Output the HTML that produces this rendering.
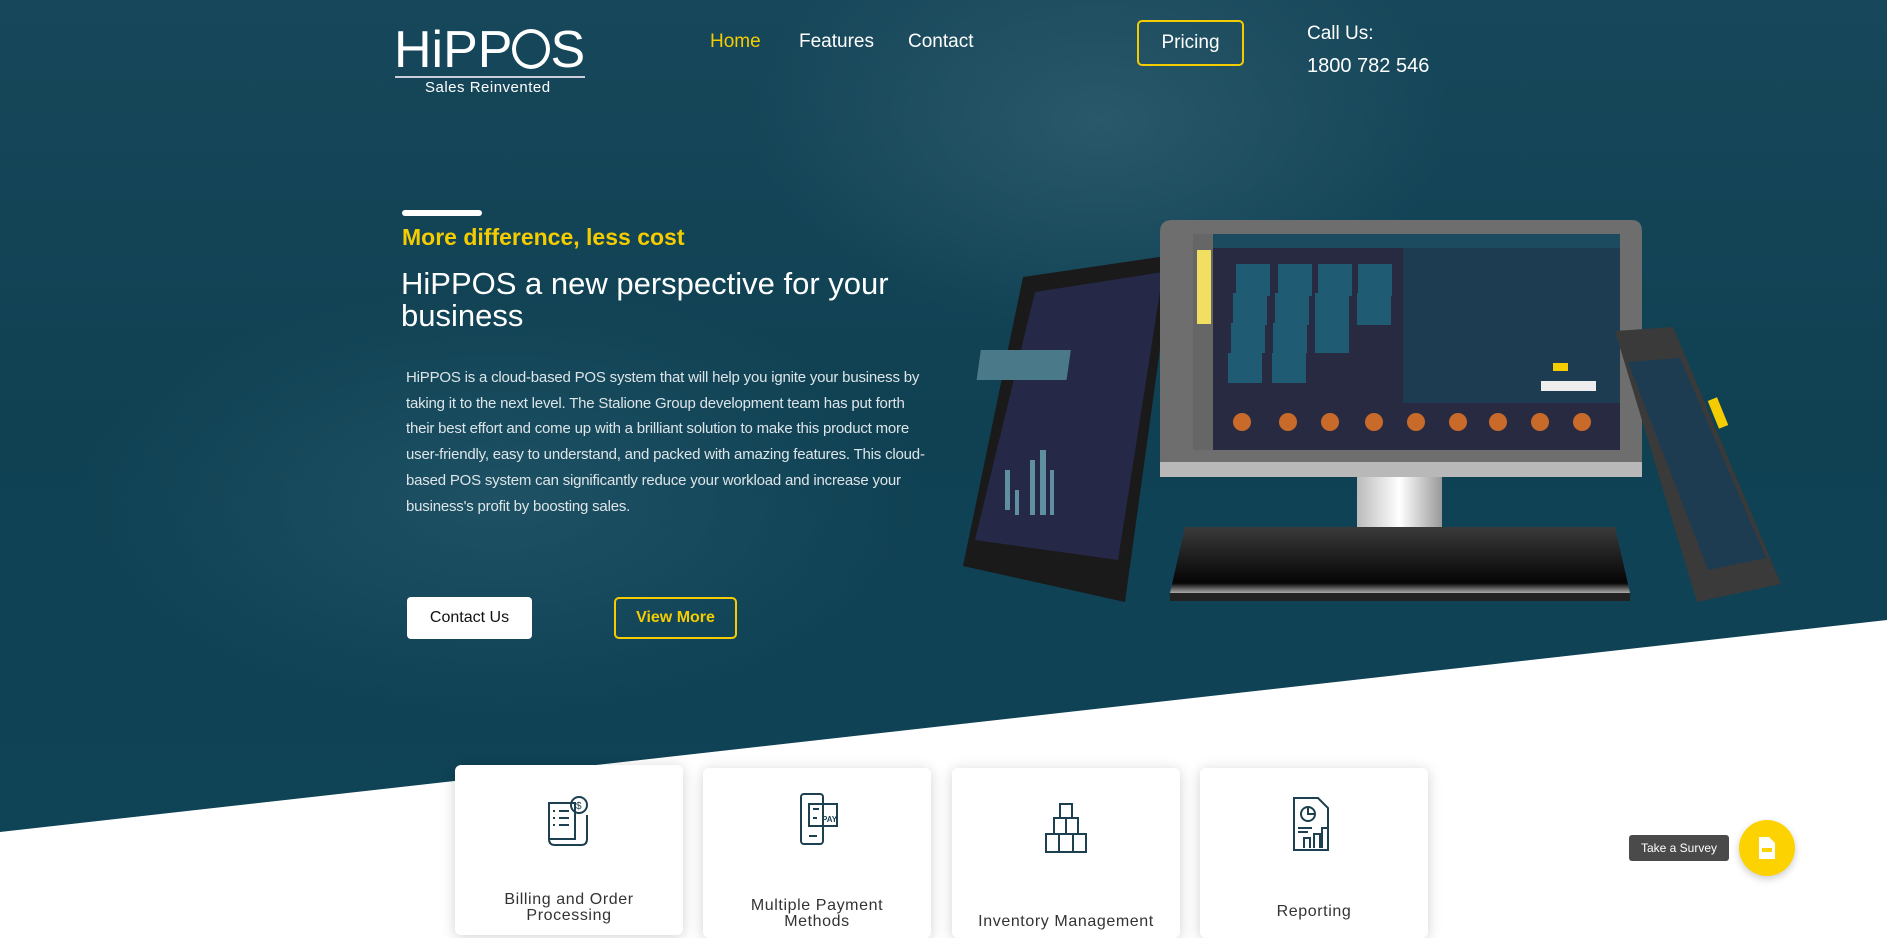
<!DOCTYPE html>
<html><head><meta charset="utf-8"><style>
*{margin:0;padding:0;box-sizing:border-box}
body{width:1887px;height:920px;overflow:hidden;background:#fff;font-family:"Liberation Sans",sans-serif;position:relative}
.hero{position:absolute;left:0;top:0;width:1887px;height:840px;
background:radial-gradient(ellipse 500px 300px at 1100px 120px,#285869 0%,rgba(40,88,105,0) 70%),radial-gradient(ellipse 600px 300px at 500px 500px,#1d5163 0%,rgba(29,81,99,0) 70%),linear-gradient(180deg,#17475a 0%,#0f4153 50%,#0f4356 100%);
clip-path:polygon(0 0,1887px 0,1887px 620px,0 832px)}
.a{position:absolute;white-space:nowrap}
.nav{font-size:19px;color:#fff;top:31px}
.card{position:absolute;top:768px;width:228px;height:170px;background:#fff;border-radius:6px;box-shadow:0 2px 14px rgba(0,0,0,.18)}
.card .t{position:absolute;left:0;right:0;text-align:center;font-size:16px;color:#333;letter-spacing:.6px;line-height:16px}
.card svg{position:absolute;left:50%;transform:translateX(-50%)}
</style></head><body>
<div class="hero"></div>
<div class="a" style="left:394px;top:22px;font-size:52px;color:#fff;letter-spacing:0px;line-height:56px">HiPP<span style="display:inline-block;width:38px;height:40px;border:4px solid #fff;border-radius:50%;vertical-align:-2px"></span>S</div>
<div class="a" style="left:395px;top:76px;width:190px;height:2px;background:#ccd"></div>
<div class="a" style="left:425px;top:79px;font-size:15px;color:#fff;letter-spacing:.5px">Sales Reinvented</div>
<div class="a nav" style="left:710px;color:#f5cc00">Home</div>
<div class="a nav" style="left:799px">Features</div>
<div class="a nav" style="left:908px">Contact</div>
<div class="a" style="left:1137px;top:20px;width:107px;height:46px;border:2px solid #f5cc00;border-radius:5px;color:#fff;font-size:19px;text-align:center;line-height:42px">Pricing</div>
<div class="a" style="left:1307px;top:23px;color:#fff;font-size:19px">Call Us:</div>
<div class="a" style="left:1307px;top:55px;color:#fff;font-size:20px">1800 782 546</div>

<div class="a" style="left:402px;top:210px;width:80px;height:6px;background:#fff;border-radius:3px"></div>
<div class="a" style="left:402px;top:224px;font-size:23px;font-weight:bold;color:#f5cc00">More difference, less cost</div>
<div class="a" style="left:401px;top:268px;font-size:31px;color:#fff;line-height:32px">HiPPOS a new perspective for your<br>business</div>
<div class="a" style="left:406px;top:365px;font-size:15px;color:#dde5e9;line-height:25.7px;letter-spacing:-.2px">HiPPOS is a cloud-based POS system that will help you ignite your business by<br>taking it to the next level. The Stalione Group development team has put forth<br>their best effort and come up with a brilliant solution to make this product more<br>user-friendly, easy to understand, and packed with amazing features. This cloud-<br>based POS system can significantly reduce your workload and increase your<br>business's profit by boosting sales.</div>
<div class="a" style="left:407px;top:597px;width:125px;height:42px;background:#fff;border-radius:4px;font-size:16px;color:#111;text-align:center;line-height:42px">Contact Us</div>
<div class="a" style="left:614px;top:597px;width:123px;height:42px;border:2px solid #f5cc00;border-radius:5px;font-size:16px;font-weight:bold;color:#f5cc00;text-align:center;line-height:38px">View More</div>

<svg class="a" style="left:0;top:0" width="1887" height="640" viewBox="0 0 1887 640">
<defs><linearGradient id="base" x1="0" y1="0" x2="0" y2="1"><stop offset="0" stop-color="#3a3a3a"/><stop offset=".85" stop-color="#050505"/><stop offset="1" stop-color="#aaa"/></linearGradient>
<linearGradient id="neck" x1="0" x2="1"><stop offset="0" stop-color="#bbb"/><stop offset=".5" stop-color="#fff"/><stop offset="1" stop-color="#999"/></linearGradient></defs>
<polygon points="1023,277 1173,255 1125,602 963,566" fill="#1a1a1a"/>
<polygon points="1035,292 1163,272 1118,560 975,540" fill="#262848"/>
<g fill="#4a7a8a"><rect x="1030" y="350" width="90" height="30" transform="skewX(-8)"/></g>
<g fill="#5f8fa0"><rect x="1005" y="470" width="5" height="40"/><rect x="1015" y="490" width="4" height="25"/><rect x="1030" y="460" width="5" height="55"/><rect x="1040" y="450" width="6" height="65"/><rect x="1050" y="470" width="4" height="45"/></g>
<rect x="1357" y="470" width="85" height="95" fill="url(#neck)"/>
<polygon points="1185,527 1615,527 1630,593 1170,593" fill="url(#base)"/>
<rect x="1170" y="593" width="460" height="8" fill="#222"/>
<path d="M1172,220 H1632 Q1642,220 1642,232 V460 Q1642,477 1625,477 H1175 Q1160,477 1160,460 V232 Q1160,220 1172,220Z" fill="#6e6e6e"/>
<rect x="1160" y="462" width="482" height="15" fill="#b8b8b8"/>
<rect x="1193" y="234" width="427" height="216" fill="#272a40"/>
<rect x="1193" y="234" width="20" height="216" fill="#666"/>
<rect x="1197" y="250" width="14" height="74" fill="#f0df60"/>
<rect x="1403" y="248" width="217" height="155" fill="#1d3c52"/>
<rect x="1213" y="234" width="407" height="14" fill="#1c4a5e"/>
<g fill="#1f5b72"><rect x="1236" y="264" width="34" height="32"/><rect x="1278" y="264" width="34" height="32"/><rect x="1318" y="264" width="34" height="32"/><rect x="1358" y="264" width="34" height="32"/><rect x="1233" y="293" width="34" height="32"/><rect x="1275" y="293" width="34" height="32"/><rect x="1315" y="293" width="34" height="32"/><rect x="1357" y="293" width="34" height="32"/><rect x="1231" y="323" width="34" height="30"/><rect x="1273" y="323" width="34" height="30"/><rect x="1315" y="323" width="34" height="30"/><rect x="1228" y="353" width="34" height="30"/><rect x="1272" y="353" width="34" height="30"/></g>
<rect x="1541" y="381" width="55" height="10" fill="#eee"/>
<rect x="1553" y="363" width="15" height="8" fill="#f5cc00"/>
<g fill="#c86a2a"><circle cx="1242" cy="422" r="9"/><circle cx="1288" cy="422" r="9"/><circle cx="1330" cy="422" r="9"/><circle cx="1374" cy="422" r="9"/><circle cx="1416" cy="422" r="9"/><circle cx="1458" cy="422" r="9"/><circle cx="1498" cy="422" r="9"/><circle cx="1540" cy="422" r="9"/><circle cx="1582" cy="422" r="9"/></g>
<polygon points="1615,331 1673,327 1781,584 1697,602" fill="#3a3a3a"/>
<polygon points="1628,362 1680,358 1766,558 1708,570" fill="#1d3c52"/>
<rect x="1713" y="398" width="10" height="30" fill="#f5cc00" transform="rotate(-22 1718 413)"/>
</svg>

<div class="card" style="left:455px;top:765px">
<svg style="top:28px" width="56" height="56" viewBox="0 0 56 56" fill="none" stroke="#1c4050" stroke-width="2"><path d="M8 10h26v36H8z"/><circle cx="38" cy="12" r="8"/><path d="M12 18h2M12 25h2M12 32h2M18 18h10M18 25h10M18 32h10M8 46q0 6 6 6h26q6 0 6-6V22"/><text x="35" y="16" font-size="10" fill="#1c4050" stroke="none" font-family="Liberation Sans">$</text></svg>
<div class="t" style="top:127px">Billing and Order<br>Processing</div></div>
<div class="card" style="left:703px">
<svg style="top:24px" width="56" height="56" viewBox="0 0 56 56" fill="none" stroke="#1c4050" stroke-width="2"><rect x="12" y="2" width="22" height="50" rx="3"/><rect x="20" y="12" width="28" height="22"/><path d="M24 17h6M24 26h4M20 44h8"/><text x="33" y="30" font-size="8" fill="#1c4050" stroke="none" font-family="Liberation Sans" font-weight="bold">PAY</text></svg>
<div class="t" style="top:130px">Multiple Payment<br>Methods</div></div>
<div class="card" style="left:952px">
<svg style="top:32px" width="56" height="56" viewBox="0 0 56 56" fill="none" stroke="#1c4050" stroke-width="2"><rect x="22" y="4" width="12" height="14"/><rect x="16" y="18" width="24" height="16"/><rect x="8" y="34" width="40" height="18"/><path d="M28 18v16M21 34v18M35 34v18"/></svg>
<div class="t" style="top:146px">Inventory Management</div></div>
<div class="card" style="left:1200px">
<svg style="top:28px" width="56" height="56" viewBox="0 0 56 56" fill="none" stroke="#1c4050" stroke-width="2"><path d="M8 2h24l10 10v42H8z"/><circle cx="22" cy="18" r="7"/><path d="M22 11v7h7M12 32h14M12 36h10M18 52V42h6v10M28 52V38h6v14M36 52V32h6v20"/></svg>
<div class="t" style="top:136px">Reporting</div></div>

<div class="a" style="left:1629px;top:835px;width:100px;height:26px;background:#4a4a4a;border-radius:3px;color:#fff;font-size:12px;text-align:center;line-height:26px">Take a Survey</div>
<div class="a" style="left:1739px;top:820px;width:56px;height:56px;border-radius:50%;background:#fcd200;box-shadow:0 3px 8px rgba(0,0,0,.2)">
<svg style="position:absolute;left:20px;top:17px" width="16" height="22" viewBox="0 0 16 22"><path d="M0 0h10l6 6v16H0z" fill="#fff"/><rect x="3" y="11" width="10" height="4" fill="#fcd200"/></svg></div>
</body></html>
